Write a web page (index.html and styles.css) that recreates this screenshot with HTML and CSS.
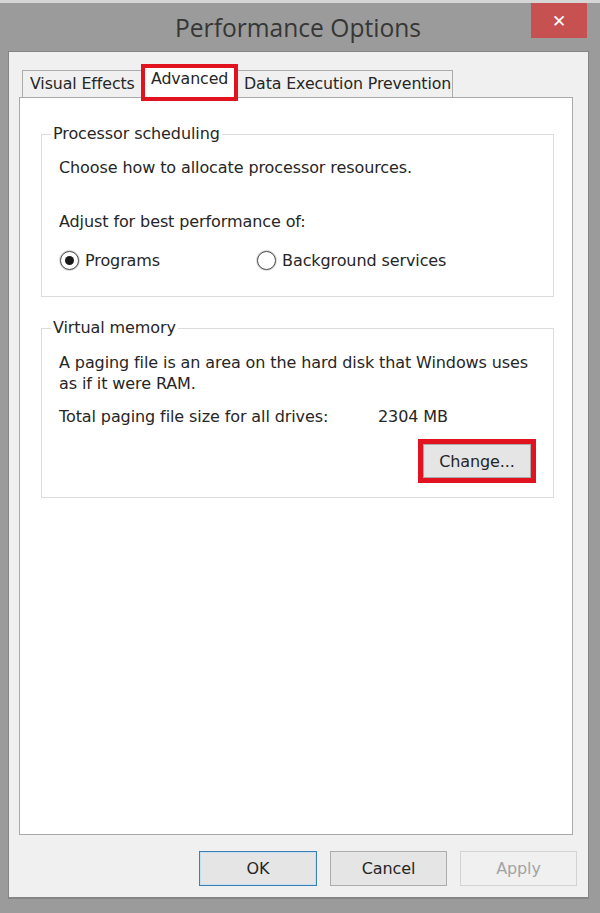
FILE: index.html
```html
<!DOCTYPE html>
<html lang="en">
<head>
    <meta charset="UTF-8">
    <meta name="viewport" content="width=device-width, initial-scale=1.0">
    <title>Performance Options</title>

    <link rel="stylesheet" href="styles.css">
</head>
<body>
    <div class="window">
        <div class="titlebar">
            <span></span>
            <h1 class="title">Performance Options</h1>
            <button class="close" type="button">&#x2715;</button>
        </div>

        <div class="client">
            <div class="tabs">
                <div class="tab tab-ve">Visual Effects</div>
                <div class="tab tab-active">Advanced</div>
                <div class="tab tab-dep">Data Execution Prevention</div>
            </div>

            <div class="panel">
                <fieldset class="group group-cpu">
                    <legend>Processor scheduling</legend>
                    <p>Choose how to allocate processor resources.</p>
                    <p class="adjust">Adjust for best performance of:</p>
                    <div class="radios">
                        <label class="radio"><span class="dot checked"></span>Programs</label>
                        <label class="radio radio-bg"><span class="dot"></span>Background services</label>
                    </div>
                </fieldset>

                <fieldset class="group group-vm">
                    <legend>Virtual memory</legend>
                    <p>A paging file is an area on the hard disk that Windows uses<br>as if it were RAM.</p>
                    <div class="total">
                        <span>Total paging file size for all drives:</span>
                        <span>2304 MB</span>
                    </div>
                    <div class="change-row">
                        <span class="marker">
                            <button class="btn btn-change" type="button">Change...</button>
                        </span>
                    </div>
                </fieldset>
            </div>

            <div class="buttons">
                <button class="btn btn-default" type="button">OK</button>
                <button class="btn" type="button">Cancel</button>
                <button class="btn btn-disabled" type="button">Apply</button>
            </div>
        </div>
    </div>
</body>
</html>
```

FILE: styles.css
```css
* {
    margin: 0;
    padding: 0;
    box-sizing: border-box;
}

body {
    background: #9b9b9b;
    font-family: 'DejaVu Sans', Verdana, sans-serif;
    font-size: 16px;
    letter-spacing: -0.1px;
    color: #262626;
    width: 600px;
    height: 913px;
    overflow: hidden;
}

.window {
    height: 913px;
    border-top: 3px solid #d6d6d6;
}

/* title bar */
.titlebar {
    display: grid;
    grid-template-columns: 1fr auto 1fr;
    height: 48px;
}

.title {
    font-family: 'Open Sans', 'Noto Sans', sans-serif;
    font-weight: 400;
    font-size: 24.6px;
    letter-spacing: 0;
    color: #363636;
    line-height: 50px;
    padding-right: 4px;
}

.close {
    justify-self: end;
    width: 56px;
    height: 35px;
    margin-right: 13px;
    border: 0;
    background: #c75050;
    color: #fff;
    font-family: 'DejaVu Sans', sans-serif;
    font-weight: bold;
    font-size: 17px;
}

/* client area */
.client {
    margin: 0 11px 0 8px;
    height: 848px;
    background: #f0f0f0;
    border: 1px solid #858585;
    border-bottom-width: 2px;
    padding: 12px 11px 0 12px;
}

.tabs {
    display: flex;
    align-items: flex-end;
    height: 33px;
    padding-left: 1px;
}

.tab {
    height: 27px;
    line-height: 25px;
    padding: 0 6px;
    border: 1px solid #acacac;
    border-bottom: 0;
    background: #f0f0f0;
    font-size: 15.8px;
    white-space: nowrap;
}

.tab-ve {
    width: 119px;
    border-right: 0;
    padding-left: 7px;
}

.tab-active {
    position: relative;
    z-index: 2;
    width: 97px;
    height: 37px;
    margin-bottom: -4px;
    border: 4px solid #e0131f;
    background: #fff;
    line-height: 22px;
    padding: 0 0 0 6px;
}

.tab-dep {
    width: 215px;
    border-left: 0;
    padding-left: 6px;
}

.panel {
    height: 738px;
    margin-right: 4px;
    margin-left: -2px;
    background: #fff;
    border: 1px solid #a9a9a9;
    padding: 26px 18px 0 21px;
}

/* group boxes */
.group {
    border: 1px solid #dcdcdc;
    padding: 13px 16px 0 17px;
}

.group legend {
    margin-left: -8px;
    padding: 0 2px;
    line-height: 20px;
}

.group p {
    line-height: 21px;
}

.group-cpu {
    padding-bottom: 25px;
}

.group-cpu .adjust {
    margin-top: 33px;
}

.radios {
    display: flex;
    margin-top: 18px;
    line-height: 21px;
}

.radio {
    display: flex;
    align-items: center;
}

.radio-bg {
    margin-left: 96px;
}

.dot {
    width: 19px;
    height: 19px;
    margin-left: 1px;
    margin-right: 6px;
    border: 1px solid #4a4a4a;
    border-radius: 50%;
    background: #fff;
    box-shadow: 0 0 0 1px #d8d8d8;
    display: flex;
    align-items: center;
    justify-content: center;
}

.dot.checked::after {
    content: "";
    width: 9px;
    height: 9px;
    border-radius: 50%;
    background: #1a1a1a;
}

.group-vm {
    margin-top: 21px;
    padding-top: 14px;
    padding-bottom: 14px;
}

.total {
    display: grid;
    grid-template-columns: 319px auto;
    margin-top: 12px;
    line-height: 21px;
}

.change-row {
    display: flex;
    justify-content: flex-end;
    margin-top: 12px;
    margin-right: 1px;
}

.marker {
    border: 5px solid #e0131f;
}

/* buttons */
.btn {
    width: 117px;
    height: 35px;
    background: #e5e5e5;
    border: 1px solid #acacac;
    font-family: 'DejaVu Sans', Verdana, sans-serif;
    font-size: 16px;
    letter-spacing: -0.1px;
    color: #262626;
}

.btn-change {
    display: block;
    width: 108px;
    height: 34px;
}

.buttons {
    display: flex;
    justify-content: flex-end;
    gap: 13px;
    margin-top: 16px;
}

.btn-default {
    width: 118px;
    border-color: #3c7fb1;
    box-shadow: inset 0 0 0 1px #c6e0f2;
}

.btn-disabled {
    background: #f0f0f0;
    border-color: #d3d3d3;
    color: #a3a3a3;
}
```
